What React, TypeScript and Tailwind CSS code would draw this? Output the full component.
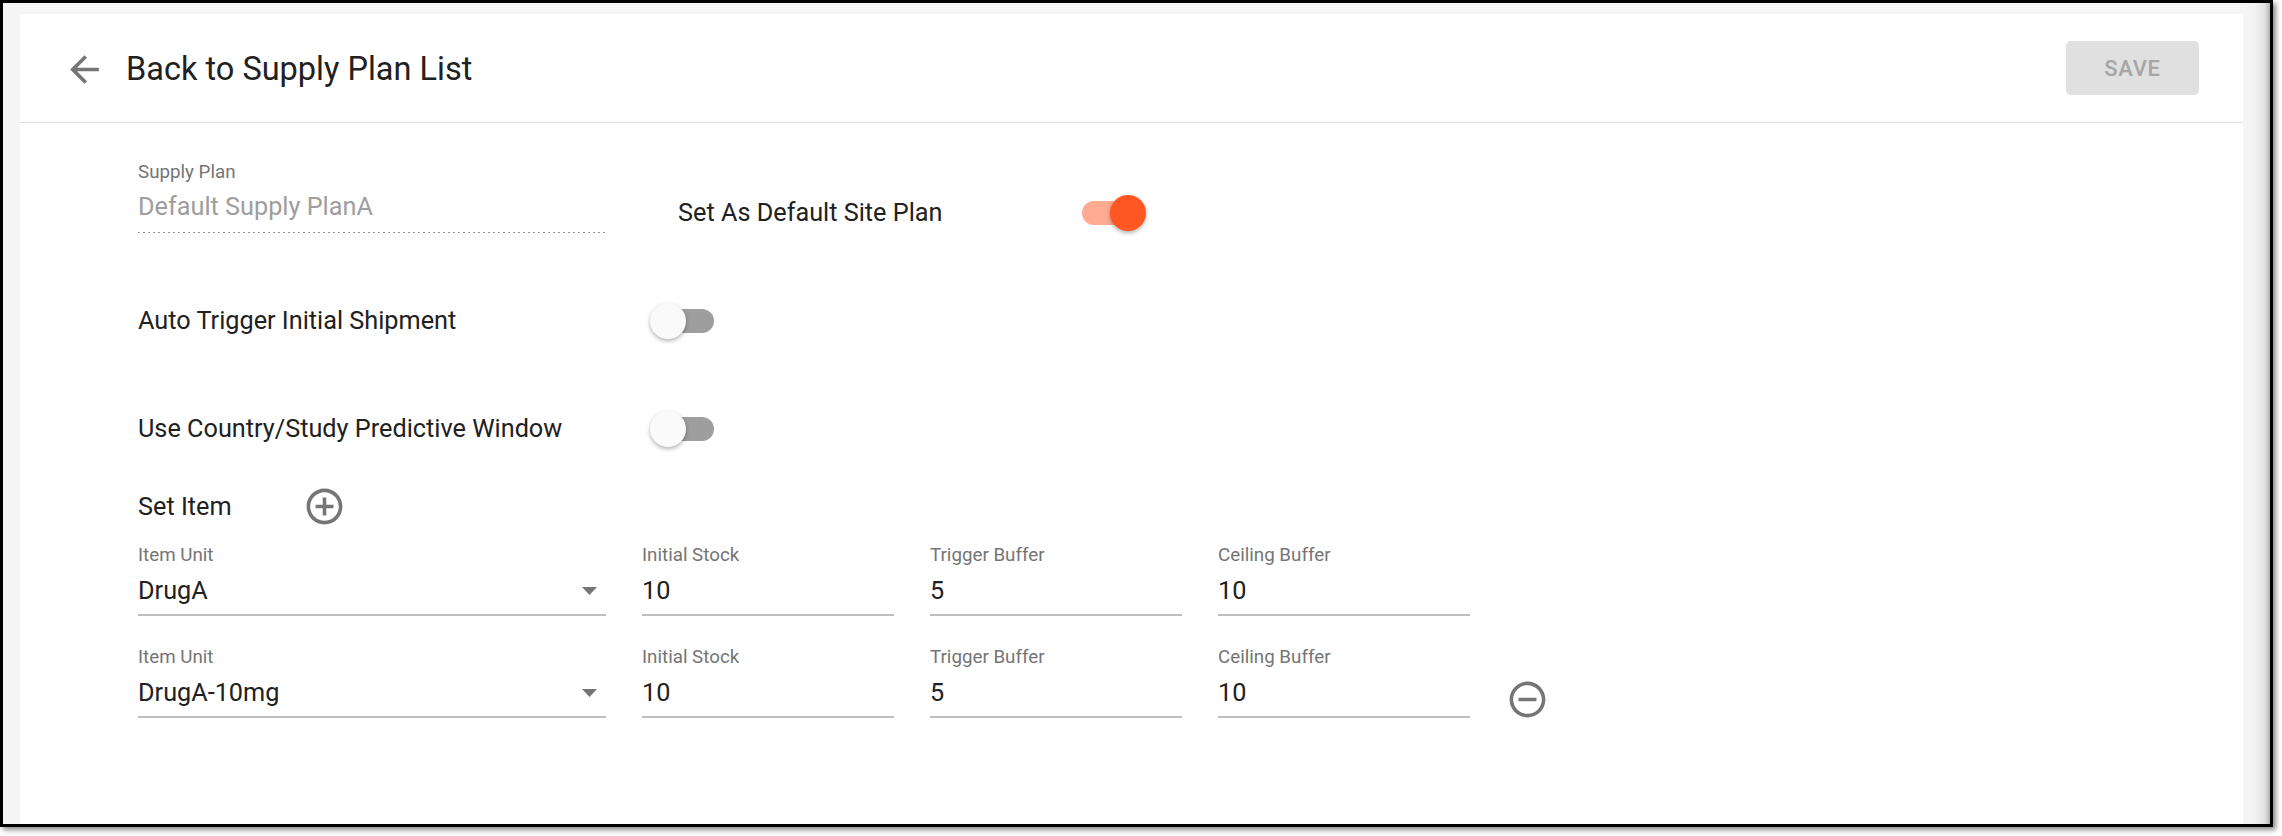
import React from 'react';

const font = { fontFamily: 'Roboto, "Noto Sans", sans-serif' };

function Toggle({ on }: { on: boolean }) {
  return (
    <div className="relative w-[64px] h-[36px] flex items-center shrink-0">
      <div
        className={
          on
            ? 'w-[61px] h-[24px] rounded-full bg-[#ffab91]'
            : 'ml-[3px] w-[61px] h-[24px] rounded-full bg-[#9e9e9e]'
        }
      />
      <div
        className={
          on
            ? 'absolute top-0 right-0 w-[36px] h-[36px] rounded-full bg-[#ff5722] shadow-[0_2px_4px_rgba(0,0,0,0.3)]'
            : 'absolute top-0 left-0 w-[36px] h-[36px] rounded-full bg-[#fafafa] shadow-[0_2px_4px_rgba(0,0,0,0.3)]'
        }
      />
    </div>
  );
}

function AddCircle() {
  return (
    <svg width="43" height="43" viewBox="0 0 24 24" fill="#757575">
      <path d="M13 7h-2v4H7v2h4v4h2v-4h4v-2h-4V7zm-1-5C6.48 2 2 6.48 2 12s4.48 10 10 10 10-4.48 10-10S17.52 2 12 2zm0 18c-4.41 0-8-3.59-8-8s3.59-8 8-8 8 3.59 8 8-3.59 8-8 8z" />
    </svg>
  );
}

function RemoveCircle() {
  return (
    <svg width="43" height="43" viewBox="0 0 24 24" fill="#757575">
      <path d="M7 11v2h10v-2H7zm5-9C6.48 2 2 6.48 2 12s4.48 10 10 10 10-4.48 10-10S17.52 2 12 2zm0 18c-4.41 0-8-3.59-8-8s3.59-8 8-8 8 3.59 8 8-3.59 8-8 8z" />
    </svg>
  );
}

function Field({ label, value, width, select }: { label: string; value: string; width: string; select?: boolean }) {
  return (
    <div className={`flex flex-col ${width}`}>
      <span className="text-[18.75px] leading-[22px] text-[#757575]">{label}</span>
      <div className="mt-[10px] h-[30px] flex items-center justify-between text-[25.25px] leading-[30px] text-[#212121]">
        <span>{value}</span>
        {select && (
          <svg width="15" height="8" viewBox="0 0 15 8" className="mr-[9px]">
            <polygon points="0,0 15,0 7.5,8" fill="#757575" />
          </svg>
        )}
      </div>
      <div className="mt-[8px] h-[2px] bg-[#bdbdbd]" />
    </div>
  );
}

const items = [
  { unit: 'DrugA', initial: '10', trigger: '5', ceiling: '10' },
  { unit: 'DrugA-10mg', initial: '10', trigger: '5', ceiling: '10' },
];

export default function App() {
  return (
    <div className="w-[2282px] h-[836px] bg-white overflow-hidden" style={font}>
      <div className="w-[2273px] h-[827px] border-[3px] border-black bg-[#f5f5f5] shadow-[3px_3px_5px_rgba(0,0,0,0.45)] flex">
        <div className="w-[2240px] h-full pl-[17px] pt-[11px]">
          <div className="w-[2223px] h-full bg-white">
            {/* header */}
            <div className="h-[109px] flex items-center border-b border-[#e0e0e0] pl-[43px] pr-[44px]">
              <svg width="43" height="43" viewBox="0 0 24 24" fill="#757575" className="mt-[2px]">
                <path d="M20 11H7.83l5.59-5.59L12 4l-8 8 8 8 1.41-1.41L7.83 13H20v-2z" />
              </svg>
              <span className="ml-[20px] mt-[3px] text-[32.5px] text-[#212121]">Back to Supply Plan List</span>
              <button className="ml-auto w-[133px] h-[54px] rounded-[5px] bg-[#e0e0e0] text-[#a6a6a6] text-[22px] font-medium tracking-[0.03em] uppercase">
                Save
              </button>
            </div>

            {/* form */}
            <div className="pl-[118px] flex flex-col">
              <div className="flex pt-[38px]">
                <div className="flex flex-col w-[468px]">
                  <span className="text-[18.75px] leading-[22px] text-[#757575]">Supply Plan</span>
                  <span className="mt-[9px] text-[25.25px] leading-[30px] text-[#9e9e9e]">Default Supply PlanA</span>
                  <div className="mt-[10px] h-px bg-[linear-gradient(to_right,rgba(0,0,0,0.42)_40%,transparent_0%)] bg-[length:5px_1px] bg-repeat-x" />
                </div>
                <div className="ml-[72px] mt-[34px] flex items-center h-[36px]">
                  <span className="w-[404px] text-[25.25px] text-[#212121]">Set As Default Site Plan</span>
                  <Toggle on />
                </div>
              </div>

              <div className="mt-[70px] h-[36px] flex items-center">
                <span className="w-[512px] text-[25.25px] text-[#212121]">Auto Trigger Initial Shipment</span>
                <Toggle on={false} />
              </div>

              <div className="mt-[72px] h-[36px] flex items-center">
                <span className="w-[512px] text-[25.25px] text-[#212121]">Use Country/Study Predictive Window</span>
                <Toggle on={false} />
              </div>

              <div className="mt-[38px] h-[43px] flex items-center">
                <span className="w-[165px] text-[25.25px] text-[#212121]">Set Item</span>
                <AddCircle />
              </div>

              <div className="mt-[16px] flex flex-col gap-[30px]">
                {items.map((it, i) => (
                  <div key={i} className="flex items-start gap-[36px]">
                    <Field label="Item Unit" value={it.unit} width="w-[468px]" select />
                    <Field label="Initial Stock" value={it.initial} width="w-[252px]" />
                    <Field label="Trigger Buffer" value={it.trigger} width="w-[252px]" />
                    <Field label="Ceiling Buffer" value={it.ceiling} width="w-[252px]" />
                    {i === 1 && (
                      <div className="mt-[32px]">
                        <RemoveCircle />
                      </div>
                    )}
                  </div>
                ))}
              </div>
            </div>
          </div>
        </div>
        <div className="flex-1 h-full bg-[linear-gradient(to_right,#f5f5f5_0%,#f2f2f2_45%,#e2e2e2_80%,#b4b4b4_100%)]" />
      </div>
    </div>
  );
}
